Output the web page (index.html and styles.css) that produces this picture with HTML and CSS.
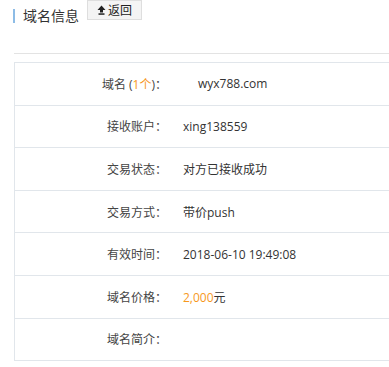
FILE: index.html
```html
<!DOCTYPE html>
<html lang="zh-CN">
<head>
    <meta charset="UTF-8">
    <title>域名信息</title>
    <link rel="stylesheet" href="styles.css">
</head>
<body>
    <div class="head">
        <h2 class="title">域名信息</h2>
        <button class="back">
            <svg width="9" height="10" viewBox="0 0 9 10"><path d="M4.5 0.5 L8.5 5 L6 5 L6 7.5 L3 7.5 L3 5 L0.5 5 Z" fill="#222"/><rect x="1.5" y="8.3" width="6" height="1.5" fill="#222"/></svg>返回
        </button>
    </div>
    <table class="info">
        <tr>
            <td class="label">域名 (<span class="hl">1个</span>)：</td>
            <td class="value"><span class="domain">wyx788.com</span></td>
        </tr>
        <tr>
            <td class="label">接收账户：</td>
            <td class="value">xing138559</td>
        </tr>
        <tr>
            <td class="label">交易状态：</td>
            <td class="value">对方已接收成功</td>
        </tr>
        <tr>
            <td class="label">交易方式：</td>
            <td class="value">带价push</td>
        </tr>
        <tr>
            <td class="label">有效时间：</td>
            <td class="value">2018-06-10 19:49:08</td>
        </tr>
        <tr>
            <td class="label">域名价格：</td>
            <td class="value"><span class="hl">2,000</span>元</td>
        </tr>
        <tr>
            <td class="label">域名简介：</td>
            <td class="value"></td>
        </tr>
    </table>
</body>
</html>
```

FILE: styles.css
```css
body {
    margin: 0;
    font-family: 'Open Sans', 'Noto Sans CJK SC', sans-serif;
    font-size: 12px;
    color: #333;
    background: #fff;
}
.head {
    display: flex;
    align-items: flex-start;
    height: 53px;
    margin-left: 14px;
    border-bottom: 1px solid #e3e3e3;
}
.title {
    margin: 9px 0 0 -1px;
    padding-left: 8px;
    border-left: 2px solid #8dbce6;
    font-size: 14px;
    font-weight: normal;
    line-height: 14px;
    color: #333;
}
.back {
    display: flex;
    align-items: center;
    gap: 2px;
    height: 20px;
    margin-left: 8px;
    padding: 0 9px;
    border: 1px solid #dedede;
    background: #f4f4f4;
    font-family: inherit;
    font-size: 12px;
    color: #222;
}
.info {
    margin: 8px 0 0 14px;
    width: calc(100% - 14px);
    border-collapse: collapse;
    border: 1px solid #e1e6eb;
    border-right: none;
}
.info td {
    height: 41.6px;
    padding: 0;
    border-bottom: 1px solid #e1e6eb;
}
.label {
    width: 152px;
    text-align: right;
    color: #444;
}
.value {
    padding-left: 16px !important;
}
.domain {
    padding-left: 15px;
}
.hl {
    color: #f7981d;
}
```
